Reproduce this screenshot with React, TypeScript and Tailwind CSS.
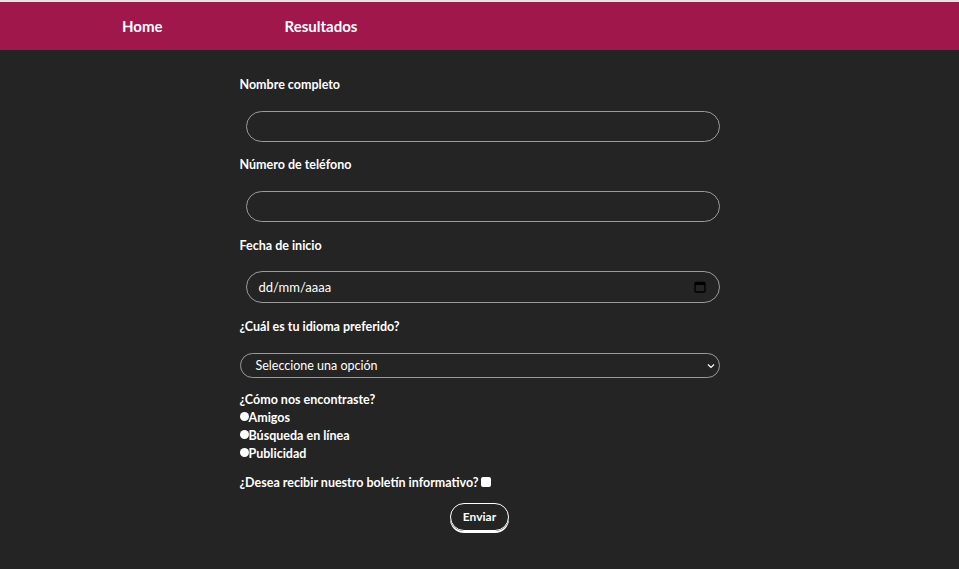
import React from "react";

function Label({ children, className = "" }: { children: React.ReactNode; className?: string }) {
  return <div className={`text-[12.5px] leading-[16px] pt-[1px] -mb-[1px] font-bold text-white ${className}`}>{children}</div>;
}

function Radio({ label }: { label: string }) {
  return (
    <div className="flex items-center h-[18px] text-[12.5px] font-bold text-white">
      <span className="w-[9px] h-[9px] rounded-full bg-white -mt-[3px]" />
      <span>{label}</span>
    </div>
  );
}

export default function App() {
  return (
    <div className="min-h-[569px] bg-[#242424] font-['Lato',sans-serif] text-white">
      <div className="h-[2px] bg-[#e4e4e4]" />
      <nav className="h-[48px] bg-[#9f174b] flex items-center">
        <div className="flex gap-[122px] ml-[122px] text-[15px] font-bold leading-none">
          <span>Home</span>
          <span>Resultados</span>
        </div>
      </nav>
      <form className="w-[480px] mx-auto flex flex-col pt-[26px]" onSubmit={(e) => e.preventDefault()}>
        <Label>Nombre completo</Label>
        <div className="ml-[6px] mt-[19px] h-[31px] rounded-full border border-[#9a9a9a]" />
        <Label className="mt-[14px]">Número de teléfono</Label>
        <div className="ml-[6px] mt-[19px] h-[31px] rounded-full border border-[#9a9a9a]" />
        <Label className="mt-[15px]">Fecha de inicio</Label>
        <div className="ml-[6px] mt-[18px] h-[32px] rounded-full border border-[#9a9a9a] flex items-center pl-[12px] pr-[13px] text-[13px]">
          <span className="flex-1 pt-[2px]">dd/mm/aaaa</span>
          <svg width="12" height="12" viewBox="0 0 12 12" fill="none">
            <rect x="1" y="1.5" width="10" height="9.5" rx="1" stroke="#000" strokeWidth="1.3" />
            <rect x="1" y="1.5" width="10" height="2.5" fill="#000" />
          </svg>
        </div>
        <Label className="mt-[15px]">¿Cuál es tu idioma preferido?</Label>
        <div className="mt-[19px] h-[25px] rounded-full border border-[#9a9a9a] flex items-center pl-[15px] pr-[4px] text-[12.5px]">
          <span className="flex-1 pt-[2px]">Seleccione una opción</span>
          <svg width="8" height="8" viewBox="0 0 8 8" fill="none">
            <path d="M1 2.5 L4 5.5 L7 2.5" stroke="#fff" strokeWidth="1.2" />
          </svg>
        </div>
        <div className="mt-[13px] text-[12.5px] font-bold leading-[18px]">¿Cómo nos encontraste?</div>
        <Radio label="Amigos" />
        <Radio label="Búsqueda en línea" />
        <Radio label="Publicidad" />
        <div className="mt-[11px] flex items-center h-[18px] text-[12.5px] font-bold">
          <span>¿Desea recibir nuestro boletín informativo?</span>
          <span className="ml-[2px] w-[10px] h-[10px] rounded-[2px] bg-white -mt-[2px]" />
        </div>
        <div className="flex justify-center mt-[11px]">
          <button className="h-[28px] px-[12px] rounded-full border border-white shadow-[0_2px_0_#fff] text-[12px] font-bold leading-none">
            Enviar
          </button>
        </div>
      </form>
    </div>
  );
}
